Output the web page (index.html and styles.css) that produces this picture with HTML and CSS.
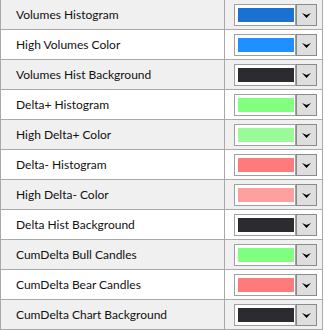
FILE: index.html
```html
<!DOCTYPE html>
<html lang="en">
<head>
	<meta charset="UTF-8">
	<title>Delta Colors</title>
	<link rel="stylesheet" href="styles.css">
</head>
<body>
<div class="grid">
	<div class="row alt"><div class="name">Volumes Histogram</div><div class="value"><div class="picker"><div class="swatch"><span class="fill" style="background:#1a72ce"></span></div><div class="drop"><svg width="9" height="5" viewBox="0 0 9 5"><polygon points="0,0 4.5,2 9,0 4.5,5" fill="#000"/></svg></div></div></div></div>
	<div class="row"><div class="name">High Volumes Color</div><div class="value"><div class="picker"><div class="swatch"><span class="fill" style="background:#1e90ff"></span></div><div class="drop"><svg width="9" height="5" viewBox="0 0 9 5"><polygon points="0,0 4.5,2 9,0 4.5,5" fill="#000"/></svg></div></div></div></div>
	<div class="row alt"><div class="name">Volumes Hist Background</div><div class="value"><div class="picker"><div class="swatch"><span class="fill" style="background:#2b2b30"></span></div><div class="drop"><svg width="9" height="5" viewBox="0 0 9 5"><polygon points="0,0 4.5,2 9,0 4.5,5" fill="#000"/></svg></div></div></div></div>
	<div class="row"><div class="name">Delta+ Histogram</div><div class="value"><div class="picker"><div class="swatch"><span class="fill" style="background:#80ff80"></span></div><div class="drop"><svg width="9" height="5" viewBox="0 0 9 5"><polygon points="0,0 4.5,2 9,0 4.5,5" fill="#000"/></svg></div></div></div></div>
	<div class="row alt"><div class="name">High Delta+ Color</div><div class="value"><div class="picker"><div class="swatch"><span class="fill" style="background:#98fb98"></span></div><div class="drop"><svg width="9" height="5" viewBox="0 0 9 5"><polygon points="0,0 4.5,2 9,0 4.5,5" fill="#000"/></svg></div></div></div></div>
	<div class="row"><div class="name">Delta- Histogram</div><div class="value"><div class="picker"><div class="swatch"><span class="fill" style="background:#ff7b7b"></span></div><div class="drop"><svg width="9" height="5" viewBox="0 0 9 5"><polygon points="0,0 4.5,2 9,0 4.5,5" fill="#000"/></svg></div></div></div></div>
	<div class="row alt"><div class="name">High Delta- Color</div><div class="value"><div class="picker"><div class="swatch"><span class="fill" style="background:#ffa0a0"></span></div><div class="drop"><svg width="9" height="5" viewBox="0 0 9 5"><polygon points="0,0 4.5,2 9,0 4.5,5" fill="#000"/></svg></div></div></div></div>
	<div class="row"><div class="name">Delta Hist Background</div><div class="value"><div class="picker"><div class="swatch"><span class="fill" style="background:#2b2b30"></span></div><div class="drop"><svg width="9" height="5" viewBox="0 0 9 5"><polygon points="0,0 4.5,2 9,0 4.5,5" fill="#000"/></svg></div></div></div></div>
	<div class="row alt"><div class="name">CumDelta Bull Candles</div><div class="value"><div class="picker"><div class="swatch"><span class="fill" style="background:#80ff80"></span></div><div class="drop"><svg width="9" height="5" viewBox="0 0 9 5"><polygon points="0,0 4.5,2 9,0 4.5,5" fill="#000"/></svg></div></div></div></div>
	<div class="row"><div class="name">CumDelta Bear Candles</div><div class="value"><div class="picker"><div class="swatch"><span class="fill" style="background:#ff7b7b"></span></div><div class="drop"><svg width="9" height="5" viewBox="0 0 9 5"><polygon points="0,0 4.5,2 9,0 4.5,5" fill="#000"/></svg></div></div></div></div>
	<div class="row alt"><div class="name">CumDelta Chart Background</div><div class="value"><div class="picker"><div class="swatch"><span class="fill" style="background:#2b2b30"></span></div><div class="drop"><svg width="9" height="5" viewBox="0 0 9 5"><polygon points="0,0 4.5,2 9,0 4.5,5" fill="#000"/></svg></div></div></div></div>
</div>
</body>
</html>
```

FILE: styles.css
```css
body{
	margin:0;
	background:#fff;
	font-size:12px;
	font-family:Lato,"Noto Sans",sans-serif;
	color:#111;
}
.grid{
	width:321px;
	border-left:1px solid #a9a9a9;
	border-right:1px solid #a9a9a9;
}
.row{
	display:flex;
	height:29px;
	border-bottom:1px solid #a9a9a9;
	background:#fff;
}
.row.alt{
	background:#f0f0f0;
}
.name{
	width:208px;
	padding-left:15px;
	border-right:1px solid #a9a9a9;
	display:flex;
	align-items:center;
	padding-bottom:1px;
}
.value{
	flex:1;
	display:flex;
	align-items:center;
	padding-left:9px;
}
.picker{
	display:flex;
	height:22px;
}
.swatch{
	width:56px;
	padding:3px 1px 3px 3px;
	border:1px solid #a0a0a0;
	background:#fff;
}
.fill{
	display:block;
	height:14px;
}
.drop{
	width:19px;
	border:1px solid #8a8a8a;
	background:#dedede;
	display:flex;
	align-items:center;
	justify-content:center;
	padding-top:1px;
}
```
